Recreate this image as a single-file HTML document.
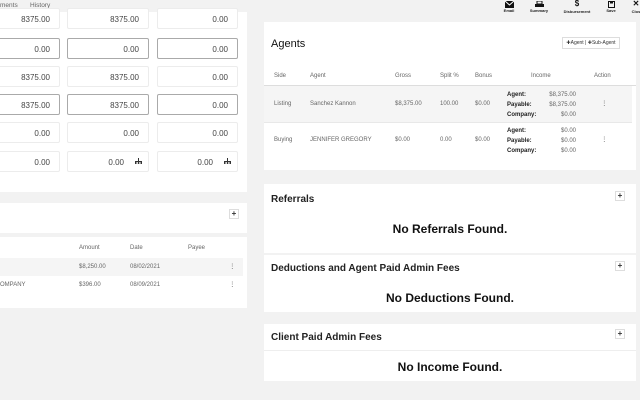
<!DOCTYPE html>
<html><head><style>
*{box-sizing:border-box;margin:0;padding:0}
body{width:640px;height:400px;overflow:hidden;background:#f2f2f2;font-family:"Liberation Sans",sans-serif;color:#333;position:relative}
.a{position:absolute}
.p{position:absolute;background:#fff}
.f{position:absolute;height:21px;border:1px solid #ececec;border-radius:2px;font-size:8px;text-align:right;padding:6px 9px 0 0;color:#444;background:#fff}
.f.b{border-color:#aaa}
.t{font-size:6.5px;color:#666}
.tiny{font-size:4px;font-weight:bold;color:#222;text-align:center}
.h{font-size:10px;font-weight:bold;color:#222}
.nf{font-size:12px;font-weight:bold;color:#111;text-align:center}
.plus{position:absolute;width:10px;height:10px;border:1px solid #ddd;font-size:8px;text-align:center;line-height:8px;background:#fff;font-weight:bold}
.lb{font-size:6px;font-weight:bold;color:#222}
.ic{display:block;margin:0 auto}
</style></head><body>
<div class="a t" style="left:0;top:2px">ments</div>
<div class="a t" style="left:30px;top:2px">History</div>
<div class="p" style="left:0;top:12px;width:247px;height:180px"></div>
<div class="f" style="left:-3px;top:8px;width:63px">8375.00</div>
<div class="f" style="left:67px;top:8px;width:82px">8375.00</div>
<div class="f" style="left:157px;top:8px;width:81px">0.00</div>
<div class="f b" style="left:-3px;top:38px;width:63px">0.00</div>
<div class="f b" style="left:67px;top:38px;width:82px">0.00</div>
<div class="f b" style="left:157px;top:38px;width:81px">0.00</div>
<div class="f" style="left:-3px;top:66px;width:63px">8375.00</div>
<div class="f" style="left:67px;top:66px;width:82px">8375.00</div>
<div class="f" style="left:157px;top:66px;width:81px">0.00</div>
<div class="f b" style="left:-3px;top:94px;width:63px">8375.00</div>
<div class="f b" style="left:67px;top:94px;width:82px">8375.00</div>
<div class="f b" style="left:157px;top:94px;width:81px">0.00</div>
<div class="f" style="left:-3px;top:122px;width:63px">0.00</div>
<div class="f" style="left:67px;top:122px;width:82px">0.00</div>
<div class="f" style="left:157px;top:122px;width:81px">0.00</div>
<div class="f" style="left:-3px;top:151px;width:63px">0.00</div>
<div class="f" style="left:67px;top:151px;width:82px;padding-right:24px">0.00</div>
<div class="f" style="left:157px;top:151px;width:81px;padding-right:24px">0.00</div>
<svg class="a" style="left:135px;top:158px" width="7" height="6" viewBox="0 0 7 6"><rect x="3" y="0" width="1" height="3" fill="#333"/><rect x="0" y="3" width="7" height="1" fill="#333"/><rect x="0" y="4" width="1.5" height="2" fill="#333"/><rect x="2.8" y="4" width="1.5" height="2" fill="#333"/><rect x="5.5" y="4" width="1.5" height="2" fill="#333"/></svg>
<svg class="a" style="left:224px;top:158px" width="7" height="6" viewBox="0 0 7 6"><rect x="3" y="0" width="1" height="3" fill="#333"/><rect x="0" y="3" width="7" height="1" fill="#333"/><rect x="0" y="4" width="1.5" height="2" fill="#333"/><rect x="2.8" y="4" width="1.5" height="2" fill="#333"/><rect x="5.5" y="4" width="1.5" height="2" fill="#333"/></svg>
<div class="p" style="left:0;top:203px;width:247px;height:30px"></div>
<div class="plus" style="left:229px;top:209px">+</div>
<div class="p" style="left:0;top:237px;width:247px;height:71px"></div>
<div class="a" style="left:0;top:258px;width:243px;height:18px;background:#f5f5f5"></div>
<div class="a t" style="left:79px;top:245px;font-size:6px">Amount</div>
<div class="a t" style="left:130px;top:245px;font-size:6px">Date</div>
<div class="a t" style="left:188px;top:245px;font-size:6px">Payee</div>
<div class="a t" style="left:79px;top:264px;font-size:6px">$8,250.00</div>
<div class="a t" style="left:130px;top:264px;font-size:6px">08/02/2021</div>
<div class="a t" style="left:229px;top:262px">⋮</div>
<div class="a t" style="left:0;top:282px;font-size:6px">OMPANY</div>
<div class="a t" style="left:79px;top:282px;font-size:6px">$396.00</div>
<div class="a t" style="left:130px;top:282px;font-size:6px">08/09/2021</div>
<div class="a t" style="left:229px;top:280px">⋮</div>
<!-- toolbar -->
<div class="a" style="left:500px;top:1px;width:18px"><svg class="ic" width="9" height="7" viewBox="0 0 9 7"><rect width="9" height="7" fill="#111"/><path d="M0 0L4.5 4L9 0" stroke="#fff" stroke-width="1" fill="none"/></svg><div class="tiny">Email</div></div>
<div class="a" style="left:526px;top:1px;width:26px"><svg class="ic" width="9" height="7" viewBox="0 0 9 7"><rect x="2" y="0" width="5" height="3" fill="none" stroke="#111"/><rect x="0" y="3" width="9" height="3" fill="#111"/></svg><div class="tiny">Summary</div></div>
<div class="a" style="left:561px;top:0;width:32px;font-size:8px;text-align:center;font-weight:bold;line-height:8px;color:#111">$<div class="tiny">Disbursement</div></div>
<div class="a" style="left:603px;top:1px;width:16px"><svg class="ic" width="7" height="7" viewBox="0 0 7 7"><rect x=".5" y=".5" width="6" height="6" fill="none" stroke="#111"/><rect x="2" y=".5" width="3" height="2" fill="#111"/></svg><div class="tiny">Save</div></div>
<div class="a" style="left:628px;top:0;width:16px;font-size:8px;text-align:center;font-weight:bold;line-height:8px;color:#111">✕<div class="tiny">Clos</div></div>
<!-- agents -->
<div class="p" style="left:264px;top:22px;width:372px;height:148px"></div>
<div class="a" style="left:271px;top:38px;font-size:11px;color:#111">Agents</div>
<div class="a" style="left:562px;top:37px;width:58px;height:12px;border:1px solid #ddd;font-size:5px;padding-top:2px;text-align:center;color:#333">✚Agent | ✚Sub-Agent</div>
<div class="a" style="left:264px;top:85px;width:372px;height:1px;background:#ddd"></div>
<div class="a" style="left:264px;top:86px;width:368px;height:36px;background:#f5f5f5"></div>
<div class="a" style="left:264px;top:122px;width:368px;height:1px;background:#e8e8e8"></div>
<div class="a t" style="left:274px;top:73px;font-size:6px">Side</div>
<div class="a t" style="left:310px;top:73px;font-size:6px">Agent</div>
<div class="a t" style="left:395px;top:73px;font-size:6px">Gross</div>
<div class="a t" style="left:440px;top:73px;font-size:6px">Split %</div>
<div class="a t" style="left:475px;top:73px;font-size:6px">Bonus</div>
<div class="a t" style="left:531px;top:73px;font-size:6px">Income</div>
<div class="a t" style="left:594px;top:73px;font-size:6px">Action</div>
<div class="a t" style="left:274px;top:101px;font-size:6px">Listing</div>
<div class="a t" style="left:310px;top:101px;font-size:6px">Sanchez Kannon</div>
<div class="a t" style="left:395px;top:101px;font-size:6px">$8,375.00</div>
<div class="a t" style="left:440px;top:101px;font-size:6px">100.00</div>
<div class="a t" style="left:475px;top:101px;font-size:6px">$0.00</div>
<div class="a lb" style="left:507px;top:90px;line-height:10px">Agent:<br>Payable:<br>Company:</div>
<div class="a t" style="left:540px;top:90px;width:36px;text-align:right;font-size:6px;line-height:10px">$8,375.00<br>$8,375.00<br>$0.00</div>
<div class="a t" style="left:601px;top:99px">⋮</div>
<div class="a t" style="left:274px;top:137px;font-size:6px">Buying</div>
<div class="a t" style="left:310px;top:137px;font-size:6px">JENNIFER GREGORY</div>
<div class="a t" style="left:395px;top:137px;font-size:6px">$0.00</div>
<div class="a t" style="left:440px;top:137px;font-size:6px">0.00</div>
<div class="a t" style="left:475px;top:137px;font-size:6px">$0.00</div>
<div class="a lb" style="left:507px;top:126px;line-height:10px">Agent:<br>Payable:<br>Company:</div>
<div class="a t" style="left:540px;top:126px;width:36px;text-align:right;font-size:6px;line-height:10px">$0.00<br>$0.00<br>$0.00</div>
<div class="a t" style="left:601px;top:135px">⋮</div>
<div class="p" style="left:264px;top:184px;width:372px;height:69px"></div>
<div class="a h" style="left:271px;top:194px">Referrals</div>
<div class="plus" style="left:615px;top:191px">+</div>
<div class="a nf" style="left:264px;top:222px;width:372px">No Referrals Found.</div>
<div class="p" style="left:264px;top:255px;width:372px;height:57px"></div>
<div class="a h" style="left:271px;top:263px">Deductions and Agent Paid Admin Fees</div>
<div class="plus" style="left:615px;top:261px">+</div>
<div class="a nf" style="left:264px;top:291px;width:372px">No Deductions Found.</div>
<div class="p" style="left:264px;top:324px;width:372px;height:57px"></div>
<div class="a h" style="left:271px;top:332px">Client Paid Admin Fees</div>
<div class="plus" style="left:615px;top:329px">+</div>
<div class="a" style="left:264px;top:350px;width:372px;height:1px;background:#eee"></div>
<div class="a nf" style="left:264px;top:360px;width:372px">No Income Found.</div>
</body></html>
